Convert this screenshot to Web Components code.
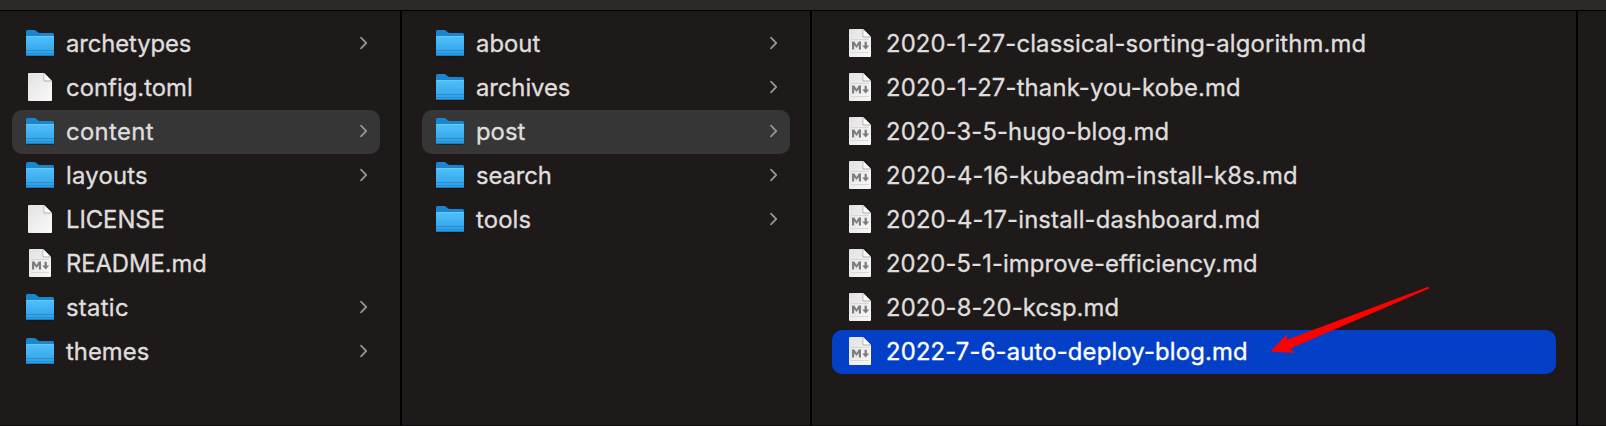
<!DOCTYPE html>
<html lang="en"><head><meta charset="utf-8"><title>Files</title>
<style>body{margin:0;background:#1e1a19}</style></head><body>
<file-browser></file-browser>
<script>
const icons = {
folder: `<svg width="30" height="30" viewBox="0 0 30 30"><defs><linearGradient id="f" x1="0" y1="0" x2="0" y2="1"><stop offset="0" stop-color="#50c0fa"/><stop offset=".7" stop-color="#38a9ed"/><stop offset="1" stop-color="#2e9de3"/></linearGradient></defs>
<path d="M2 28.300h26" stroke="#000" opacity=".4"/><path d="M1 3.500q0-1.500 1.500-1.500h6.800q1 0 1.800.8l1.700 1.400q.8.800 1.800.8H27.500q1.500 0 1.500 1.500V14H1z" fill="#1b86cf"/><path d="M1 9q0-1 1-1h26q1 0 1 1v17.500q0 1.500-1.500 1.500h-25q-1.500 0-1.500-1.500z" fill="url(#f)"/><path d="M1.500 8.500h27" stroke="#62caff"/><path d="M1 22.500h28M1 25.500h28" stroke="#2387cb" stroke-width=".8"/><path d="M1.600 27.500h26.800" stroke="#1b7abc"/></svg>`,
doc: `<svg width="30" height="30" viewBox="0 0 30 30"><defs><linearGradient id="d" x1="0" y1="0" x2="1" y2="1"><stop offset="0" stop-color="#e2e2e2"/><stop offset="1" stop-color="#fafafa"/></linearGradient></defs><path d="M3 2q0-1 1-1h15l8 8v19q0 1-1 1H4q-1 0-1-1z" fill="url(#d)"/><path d="M18.500 1v7q0 1.500 1.500 1.500h7z" fill="#aaa"/><path d="M19.300 1.300v6.200q0 1 1 1h6.200z" fill="#fff"/></svg>`,
md: `<svg width="30" height="30" viewBox="0 0 30 30"><defs><linearGradient id="m" x1="0" y1="0" x2="1" y2="1"><stop offset="0" stop-color="#e2e2e2"/><stop offset="1" stop-color="#f8f8f8"/></linearGradient></defs><path d="M4 2q0-1 1-1h13l8 8v19q0 1-1 1H5q-1 0-1-1z" fill="url(#m)"/><path d="M17.500 1v7q0 1.500 1.500 1.500h7z" fill="#aaa"/><path d="M18.300 1.300v6.200q0 1 1 1h6.200z" fill="#fff"/><path d="M6 11.500h18M6 24.500h18" stroke="#d2d2d2" stroke-width=".8"/><path d="M7 21.500v-8h2.300l2.200 3.400 2.200-3.400H16v8h-2.200v-4.600l-2.300 3.200-2.300-3.200v4.600z" fill="#7c7c7c"/><path d="M19.600 13.800h2.200v3.600h2.400l-3.500 4.200-3.500-4.200h2.400z" fill="#7c7c7c"/></svg>`
};
class FileRow extends HTMLElement{
 connectedCallback(){
  const kind=this.getAttribute('kind');
  this.attachShadow({mode:'open'}).innerHTML=`<style>
:host{display:flex;align-items:center;height:44px;border-radius:10px;box-sizing:border-box;padding:0 11px 2px 13px;color:#dfdddd;font:400 23.800px/42px Inter,"Liberation Sans",sans-serif}
:host([selected]){background:#363636}:host([active]){background:#043fc8;color:#fff}
svg{display:block;flex:none}.icon{width:30px;height:30px;margin-right:11px}
.label{flex:1;white-space:nowrap;padding-top:2px;line-height:40px;-webkit-text-stroke:.35px currentColor}.label span{display:inline-block}
</style><div class="icon">${icons[kind]}</div><div class="label"><span><slot></slot></span></div>${kind==='folder'?'<svg width="12" height="16" viewBox="0 0 12 16"><path d="M4 2.700 9.200 8 4 13.300" fill="none" stroke="#949292" stroke-width="1.800" stroke-linecap="round" stroke-linejoin="round"/></svg>':''}`;
  const s=this.shadowRoot.querySelector('.label span'),n=this.textContent.length;
  s.style.letterSpacing=(+this.getAttribute('extent')+1.3-s.getBoundingClientRect().width)/n+'px';
 }}
customElements.define('file-row',FileRow);
class FileColumn extends HTMLElement{
 connectedCallback(){this.attachShadow({mode:'open'}).innerHTML=`<style>:host{display:block;box-sizing:border-box;padding:11px 20px 0;border-right:2px solid #000}</style><slot></slot>`}}
customElements.define('file-column',FileColumn);
class PointerArrow extends HTMLElement{
 connectedCallback(){this.attachShadow({mode:'open'}).innerHTML=`<style>:host{position:absolute;left:1270px;top:286px}svg{display:block}</style><svg width="160" height="70"><path d="M.500 65.500 17 48v5.800L157.500 1q2-.3 1.800 1.500L20.500 62.500l4 4.500z" fill="#f00"/></svg>`}}
customElements.define('pointer-arrow',PointerArrow);
const columns=[
[['folder','archetypes',124],['doc','config.toml',125.5],['folder','content',86.5,'selected'],['folder','layouts',80.5],['doc','LICENSE',97.5],['md','README.md',139.5],['folder','static',61.5],['folder','themes',82]],
[['folder','about',63],['folder','archives',93],['folder','post',48,'selected'],['folder','search',74.500],['folder','tools',54]],
[['md','2020-1-27-classical-sorting-algorithm.md',479],['md','2020-1-27-thank-you-kobe.md',353.500],['md','2020-3-5-hugo-blog.md',282],['md','2020-4-16-kubeadm-install-k8s.md',410.500],['md','2020-4-17-install-dashboard.md',373],['md','2020-5-1-improve-efficiency.md',370.500],['md','2020-8-20-kcsp.md',232],['md','2022-7-6-auto-deploy-blog.md',360.5,'active']]];
class FileBrowser extends HTMLElement{
 connectedCallback(){this.attachShadow({mode:'open'}).innerHTML=`<style>
:host{display:flex;flex-direction:column;position:relative;height:426px;box-sizing:border-box;border-bottom:1px solid #0d0b0b;background:#1e1a19;overflow:hidden}
.bar{height:10px;background:#2b2a28;border-bottom:1px solid #000}
main{flex:1;display:grid;grid-template-columns:402px 410px 766px 1fr}
file-column:first-child{padding-left:12px}
</style><div class="bar"></div><main>${columns.map(c=>`<file-column>${c.map(([k,t,w,s=''])=>`<file-row kind="${k}" extent="${w}" ${s}>${t}</file-row>`).join('')}</file-column>`).join('')}</main><pointer-arrow></pointer-arrow>`}}
customElements.define('file-browser',FileBrowser);
</script></body></html>
